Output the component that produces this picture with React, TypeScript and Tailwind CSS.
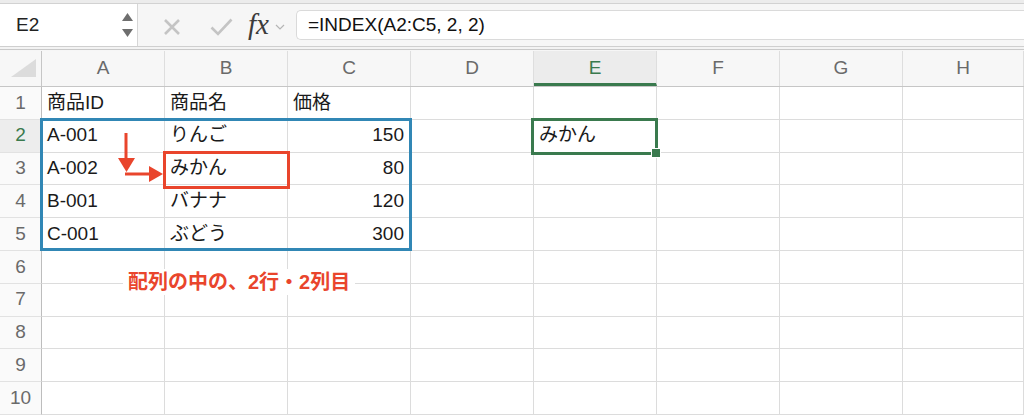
import React from "react";

const COLS = ["A", "B", "C", "D", "E", "F", "G", "H"];

type Cell = { text: string; right?: boolean };

const DATA: Record<number, Cell[]> = {
  1: [{ text: "商品ID" }, { text: "商品名" }, { text: "価格" }],
  2: [{ text: "A-001" }, { text: "りんご" }, { text: "150", right: true }, { text: "" }, { text: "みかん" }],
  3: [{ text: "A-002" }, { text: "みかん" }, { text: "80", right: true }],
  4: [{ text: "B-001" }, { text: "バナナ" }, { text: "120", right: true }],
  5: [{ text: "C-001" }, { text: "ぶどう" }, { text: "300", right: true }],
};

const font = "font-['Liberation_Sans','Noto_Sans_CJK_JP',sans-serif]";
const gridCols = "grid grid-cols-[42px_repeat(7,123px)_1fr]";

const Toolbar = () => (
  <div className="flex h-[51px] flex-col bg-[#f6f6f6]">
    <div className="h-[4px] border-b border-[#d2d2d2] bg-[#ececec]" />
    <div className="flex h-[43px] items-stretch border-b border-[#cfcfcf]">
      {/* 이름 상자 */}
      <div className="flex w-[138px] items-center justify-between border-r border-[#d6d6d6] bg-white pr-[4px] pl-[16px]">
        <span className="text-[19px] text-[#222]">E2</span>
        <div className="flex flex-col items-center gap-[8px]">
          <svg width="11" height="8" viewBox="0 0 11 8">
            <path d="M5.5 0 L11 8 L0 8 Z" fill="#6e6e6e" />
          </svg>
          <svg width="11" height="8" viewBox="0 0 11 8">
            <path d="M0 0 L11 0 L5.5 8 Z" fill="#6e6e6e" />
          </svg>
        </div>
      </div>
      {/* 취소 / 확인 / fx */}
      <div className="flex w-[158px] items-center">
        <svg className="mt-[4px] ml-[25px]" width="18" height="18" viewBox="0 0 18 18">
          <path d="M2 2 L16 16 M16 2 L2 16" stroke="#c4c4c4" strokeWidth="2.6" />
        </svg>
        <svg className="mt-[3px] ml-[29px]" width="23" height="18" viewBox="0 0 23 18">
          <path d="M1.5 9.5 L8 16 L21.5 1.5" stroke="#c4c4c4" strokeWidth="2.6" fill="none" />
        </svg>
        <span className="mb-[2px] ml-[15px] font-['Liberation_Serif',serif] text-[29px] leading-none text-[#3c3c3c] italic">fx</span>
        <svg className="mt-[4px] ml-[6px]" width="10" height="6" viewBox="0 0 10 6">
          <path d="M1 1 L5 5 L9 1" stroke="#b5b5b5" strokeWidth="1.2" fill="none" />
        </svg>
      </div>
      {/* 수식 입력줄 */}
      <div className="my-[6px] flex flex-1 items-center rounded-l-[5px] border border-r-0 border-[#dadada] bg-white pl-[11px]">
        <span className="text-[19px] text-[#111]">=INDEX(A2:C5, 2, 2)</span>
      </div>
    </div>
    <div className="h-[3px] border-b border-[#c9c9c9] bg-[#f3f3f3]" />
  </div>
);

const HeaderRow = () => (
  <div className={`${gridCols} h-[36px] border-b border-[#c6c6c6] bg-[#f7f7f7]`}>
    <div className="flex items-end justify-end border-r border-[#c6c6c6] pr-[5px] pb-[9px]">
      <svg width="25" height="18" viewBox="0 0 25 18">
        <path d="M25 0 L25 18 L0 18 Z" fill="#dcdcdc" />
      </svg>
    </div>
    {COLS.map((c) => (
      <div
        key={c}
        className={`flex items-center justify-center border-r border-[#dedede] text-[19px] ${
          c === "E" ? "border-b-[3px] border-b-[#3a7a4e] bg-[#ececec] pt-[3px] text-[#3a7a4e]" : "text-[#6a6a6a]"
        }`}>
        {c}
      </div>
    ))}
  </div>
);

const Row = ({ n }: { n: number }) => {
  const cells = DATA[n] ?? [];
  return (
    <div className={`${gridCols} h-[32.8px]`}>
      <div
        className={`flex items-center justify-center border-r border-b border-r-[#bdbdbd] border-b-[#e2e2e2] text-[19px] ${
          n === 2 ? "bg-[#ededed] text-[#3a7a4e]" : "bg-[#fafafa] text-[#6a6a6a]"
        }`}>
        {n}
      </div>
      {COLS.map((c, i) => {
        const cell = cells[i];
        return (
          <div
            key={c}
            className={`flex items-center overflow-hidden border-r border-b border-[#dcdcdc] px-[5px] text-[19px] whitespace-nowrap text-[#1a1a1a] ${
              cell?.right ? "justify-end pr-[6px]" : ""
            }`}>
            {cell?.text}
          </div>
        );
      })}
    </div>
  );
};

export default function App() {
  return (
    <div className={`relative h-[415px] w-[1024px] overflow-hidden bg-white ${font}`}>
      <Toolbar />
      <HeaderRow />
      {Array.from({ length: 10 }, (_, i) => (
        <Row key={i + 1} n={i + 1} />
      ))}

      {/* 배열 범위 (파란 테두리) */}
      <div className="absolute top-[118px] left-[40px] h-[133px] w-[372px] border-[3px] border-[#3187b5]" />

      {/* 결과 셀 (빨간 테두리) */}
      <div className="absolute top-[151px] left-[163px] h-[38px] w-[127px] border-[3px] border-[#e9452c]" />

      {/* 화살표 */}
      <svg className="absolute top-[130px] left-[115px]" width="52" height="56" viewBox="0 0 52 56">
        <path d="M11 3 L11 30" stroke="#e9452c" strokeWidth="3" />
        <path d="M3 28 L20 28 L11.5 42 Z" fill="#e9452c" />
        <path d="M10 44 L35 44" stroke="#e9452c" strokeWidth="3" />
        <path d="M34 36 L34 52 L48 44 Z" fill="#e9452c" />
      </svg>

      {/* 선택된 셀 E2 */}
      <div className="absolute top-[118px] left-[531px] h-[37px] w-[127px] border-[3px] border-[#3a7a4e]" />
      <div className="absolute top-[148px] left-[651px] h-[10px] w-[10px] border border-white bg-[#3a7a4e]" />

      {/* 설명 라벨 */}
      <div className="absolute top-[269px] left-[123px] bg-white px-[5px] text-[20px] leading-[26px] font-bold text-[#e9452c]">
        配列の中の、2行・2列目
      </div>
    </div>
  );
}
